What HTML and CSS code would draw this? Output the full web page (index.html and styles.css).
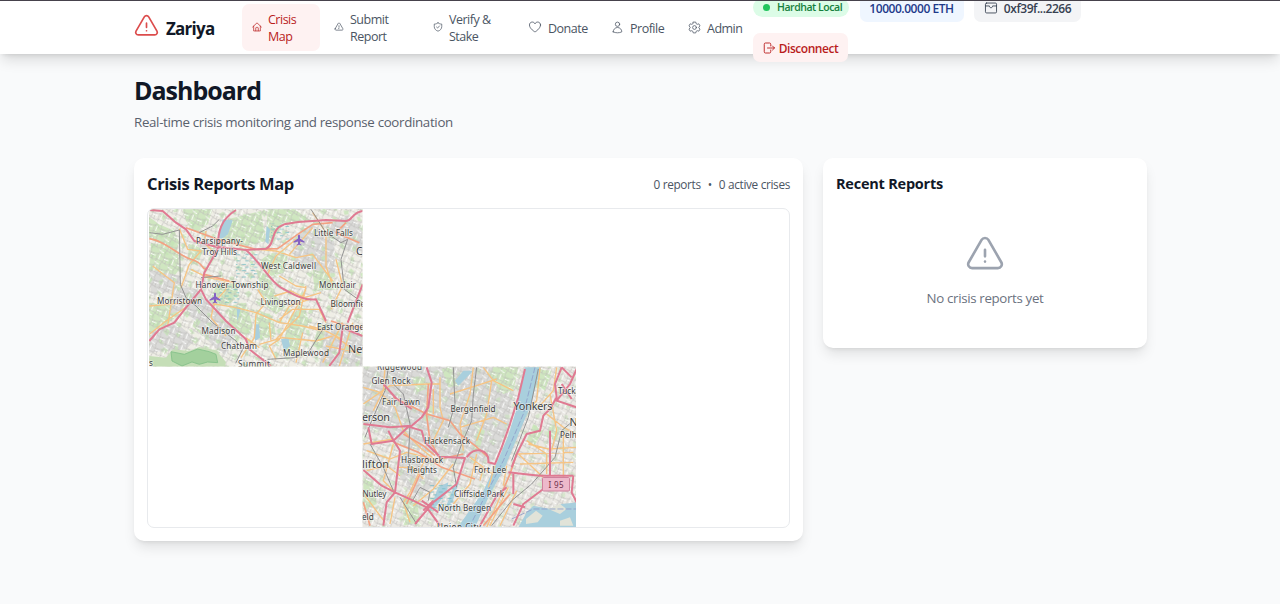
FILE: index.html
```html
<!DOCTYPE html>
<html lang="en">
<head>
<meta charset="utf-8">
<title>Zariya</title>
<link rel="stylesheet" href="styles.css">
</head>
<body>
<svg class="defs" width="0" height="0">
  <symbol id="warn" viewBox="0 0 24 24"><path d="M12 9v3.75m-9.303 3.376c-.866 1.5.217 3.374 1.948 3.374h14.71c1.73 0 2.813-1.874 1.948-3.374L13.949 3.378c-.866-1.5-3.032-1.5-3.898 0L2.697 16.126zM12 15.75h.007v.008H12v-.008z"/></symbol>
</svg>
<header class="header">
  <div class="bar">
    <div class="brand"><svg class="icon brand-icon"><use href="#warn"/></svg><span class="brand-name">Zariya</span></div>
    <nav class="nav">
      <a class="item item-active"><svg class="icon small" viewBox="0 0 24 24"><path d="M1.5 12 12 2l10.500 10M4 10v11.500h16V10M9 21v-6.500c0-1 .5-1.500 1.500-1.500h3c1 0 1.500.5 1.500 1.500V21"/></svg><span>Crisis<br>Map</span></a>
      <a class="item item-submit"><svg class="icon small" viewBox="0 0 24 24"><use href="#warn"/></svg><span>Submit<br>Report</span></a>
      <a class="item item-verify"><svg class="icon small" viewBox="0 0 24 24"><path d="M8.500 12l2.500 2.500 4.500-5M12 2c-2.500 2-5.500 3-9 3v6c0 5.500 4 9.500 9 11 5-1.500 9-5.500 9-11V5c-3.500 0-6.500-1-9-3z"/></svg><span>Verify &amp;<br>Stake</span></a>
      <a class="item item-donate"><svg class="icon" viewBox="0 0 24 24"><path d="M21.500 8.500c0-3-2.200-5-4.800-5-2.100 0-3.900 1.200-4.700 3-.8-1.800-2.600-3-4.700-3-2.600 0-4.800 2-4.800 5 0 6.500 9.500 12 9.500 12s9.500-5.500 9.500-12z"/></svg><span>Donate</span></a>
      <a class="item item-profile"><svg class="icon" viewBox="0 0 24 24"><path d="M16 6a4 4 0 1 1-8 0 4 4 0 0 1 8 0zM4 20c.1-4.500 3.600-8 8-8s7.900 3.500 8 8c-2.500 1.200-5.200 1.800-8 1.800s-5.500-.6-8-1.800z"/></svg><span>Profile</span></a>
      <a class="item item-admin"><svg class="icon" viewBox="0 0 24 24"><path d="M9.700 2h4.600l.8 3 1.900 1.100 3-.9 2.200 3.900-2.200 2.200v1.400l2.200 2.200-2.200 3.900-3-.9-1.900 1.100-.8 3H9.700l-.8-3L7 17.900l-3 .9-2.200-3.900L4 12.700v-1.400L1.800 9.100 4 5.200l3 .9L8.900 5z"/><circle cx="12" cy="12" r="3.500"/></svg><span>Admin</span></a>
    </nav>
    <div class="wallet">
      <div class="network"><i class="dot"></i><span>Hardhat Local</span></div>
      <div class="chip balance"><span>10000.0000 ETH</span></div>
      <div class="chip address"><svg class="icon" viewBox="0 0 24 24"><path d="M2.500 8.500h6.800c0 2 1.200 3 2.700 3s2.700-1 2.700-3h6.800M4.500 3.500h15a2 2 0 0 1 2 2v13a2 2 0 0 1-2 2h-15a2 2 0 0 1-2-2v-13a2 2 0 0 1 2-2z"/></svg><span>0xf39f...2266</span></div>
      <button class="chip disconnect"><svg class="icon" viewBox="0 0 24 24"><path d="M15.500 8V4.500c0-1.500-.7-2.500-2.200-2.500H4.700C3.200 2 2.500 3 2.500 4.500v15c0 1.500.7 2.500 2.200 2.500h8.600c1.500 0 2.200-1 2.200-2.500V16M9 12h14m-4-4 4 4-4 4"/></svg><span>Disconnect</span></button>
    </div>
  </div>
</header>
<main class="main">
  <h1 class="title">Dashboard</h1>
  <p class="subtitle">Real-time crisis monitoring and response coordination</p>
  <div class="columns">
    <section class="card">
      <div class="card-head">
        <h2 class="card-title">Crisis Reports Map</h2>
        <div class="stats"><span>0 reports</span><span>•</span><span>0 active crises</span></div>
      </div>
      <div class="map">
        <svg class="map-art" viewBox="148 209 641 318">
          <defs>
            <clipPath id="t1"><path d="M149 209h213.500v157.500H149z"/></clipPath>
            <clipPath id="t2"><path d="M362.500 366.500H576V527H362.500z"/></clipPath>
            <pattern id="streets" width="43" height="37" patternUnits="userSpaceOnUse" patternTransform="rotate(24)"><path d="M0 6 12 3 22 9 43 6M7 0 5 12 9 37M25 0 28 13 23 37M0 24 12 20 43 26M34 6 37 26" fill="none" stroke="#bdbab9" stroke-width="1.600"/><path d="M12 3 14 20M28 13 43 12M5 30 20 33" fill="none" stroke="#fff" stroke-width="2.500"/></pattern>
            <pattern id="woods" width="97" height="83" patternUnits="userSpaceOnUse" patternTransform="rotate(-18)"><path d="M5 8l16-3 6 12-14 8zM50 4l10 3-4 18-9-4zM75 30l14 5-3 11-13-3zM30 42l12-6 7 12-12 11zM8 60l9 2 3 15-10-2zM63 60l16-3-5 14-10 2z" fill="#c3e3b4" opacity=".75"/></pattern>
            <pattern id="marsh" width="26" height="19" patternUnits="userSpaceOnUse"><path d="M2 4h12M12 13h10" stroke="#69b7bf" stroke-width="2.200"/></pattern>
          </defs>
          <g clip-path="url(#t1)">
            <path fill="#efeee6" d="M149 209h214v158H149z"/>
            <g transform="translate(146 206) scale(.33333)">
              <g class="green">
                <path d="M5 30 40 55 85 75 100 110 85 150 60 130 10 95zM110 10h90l-15 45-35 25-30-35zM15 110l80 20 5 60-30 40-60-20zM130 110l40 20-15 50-30-20zM245 40l100-25 15 90-60 15-70-20zM10 290l60 5 30 30-50 40-40 20zM150 330l50 10 10 30-40 20-30-30zM210 240l60-10 10 40-40 30-50-10zM250 300l50-10 20 70-20 30-50-30z"/>
                <path d="M365 10h80l50 35-80 5-40 60-15-10zM375 140l50 10-10 50-40 10-35-45zM330 190l40 20 25 70-40 10zM430 330l45-30 15 50-45 70-30-15zM330 310l50 20 10 60-50 10zM440 370l25 25-5 40-40 15-5-40zM500 190l50 10 25 50-70 5zM520 350l35 20-15 60-40-10zM350 290l40-20 30 30-30 25z"/>
              </g>
              <g class="grey-area"><path d="M80 240 150 250 220 310 270 390 240 450 180 400 120 310 65 325zM10 190l95 20 0 40-90 20zM180 80 240 120 230 140 160 120zM440 100l60-45 65 40 0 110-70-15-50-20zM540 60l60-30 50 30v80l-55-10zM10 380 90 350 150 400 120 430 10 440zM540 350l80 20 35 20v100H520z"/></g>
              <path fill="url(#woods)" d="M0 0h660v490H0z"/>
              <path fill="url(#streets)" d="M0 0h660v490H0z"/>
              <path d="M10 450l50 5 20-25 50 5 30-12 50 10 30 35-5 22H30l-20-20z" fill="#c5deb7"/>
              <path d="M78 465l-3-28 40 8 40-16 35 8 20 8 5 25-30-2-25 7-22-7-30 12z" fill="#a3d09d" stroke="#82bf88" stroke-width="2.500"/>
              <path d="M217 92l13-52 30 3-14 42-20 15zM272 300l12 10-10 36zM325 355l14 0 3 40-15 10zM405 400l22-5 5 25-18 15zM362 60l10 10-5 45-9-8z" class="water"/>
              <path fill="url(#marsh)" d="M270 143h66v73h-66zM220 240h60v50h-60zM375 52h55v50h-55z"/>
              <path class="minor" d="M10 300l90-8 60-10M100 68 125 130 165 135 130 175 105 245M180 75 175 110 205 140M135 190l50 25 80 15M230 215 240 250 205 290 195 335 240 390M10 385 60 345 125 300M200 293 270 305 330 320 400 350 470 360 530 375M335 130l55 5 60 20 50-10 60 80M400 210 450 240 480 245M430 145 500 65M450 100l-60 50-25 55M500 20l40 60 0 100 20 60M385 270l50-15 40 20 50-15M335 250l25 40-30 35-5 70-40 60M370 350l5 55M400 350l30-50 60-20M490 360l40 10 60 30M480 250 400 400 370 420 390 460M540 350l-20-40-80 0-40 30M555 310 590 240M570 160 590 240M340 415l70-20 100 10 50-15M480 240l-20 90-70 70M20 180 85 230 65 360M470 380l-20 90M560 385l80 60M540 420l100 20M590 350l-60 120M620 350l-40 130M300 395l40 30"/>
              <path class="trunk" d="M10 98C60 105 90 145 135 160S160 185 180 190M120 65 215 100 330 130 395 128 455 85 500 55 560 50M555 345l50 15 45 5M600 50 570 80 640 110M175 205l75 20"/>
              <path class="rail" d="M10 80 50 85 100 72 103 235 120 275 150 300 200 350 270 405 290 430 270 470M160 80 200 60 220 40M495 10l45 70 45 30 20-10-20 60 10 90 55 40M540 355l-50 80-45 20-80 5M165 215l60-5"/>
              <path class="motor" d="M10 12 50 15 90 50 120 70 145 105 210 122 300 132 360 128C390 115 370 70 415 55 480 40 500 48 540 42L600 45C620 45 615 20 650 15M270 12C225 40 215 75 215 130L175 200 165 250 120 305 85 350 40 370 10 405M165 250 180 280 240 345 300 400 310 430 375 480M300 132C350 175 370 225 405 245S475 285 510 280L540 345M650 235 605 350M590 365 580 440 550 480M600 370l50 20"/>
            </g>
            <g class="plane"><path id="pl" d="M299 234.500l1 1v3l4.500 3v1.300L300 241.500v2.200l1.400 1v.8l-2.400-.7-2.400.7v-.8l1.400-1v-2.200l-4.500 1.300v-1.300l4.500-3v-3z"/><use href="#pl" x="-84" y="58"/></g>
            <g class="label">
              <text x="196" y="244" textLength="47">Parsippany-</text><text x="202" y="254.500" textLength="35">Troy Hills</text><text x="314" y="235.500" textLength="39">Little Falls</text><text x="261" y="268.500" textLength="55">West Caldwell</text><text x="195.500" y="287.500" textLength="73">Hanover Township</text><text x="319" y="288" textLength="37">Montclair</text><text x="157" y="303.500" textLength="45">Morristown</text><text x="260.500" y="304.500" textLength="40">Livingston</text><text x="330.500" y="306.500">Bloomfield</text><text x="201.500" y="333.500" textLength="34">Madison</text><text x="317" y="330" textLength="47">East Orange</text><text x="221" y="348.500" textLength="36">Chatham</text><text x="283" y="356" textLength="46">Maplewood</text><text x="238" y="366.500" textLength="32">Summit</text>
              <g class="big"><text x="356" y="255">Clifton</text><text x="348" y="353">Newark</text></g><text x="149" y="366">s</text>
            </g>
          </g>
          <g clip-path="url(#t2)">
            <path fill="#ebe9e4" d="M362 366h215v162H362z"/>
            <g transform="translate(360 364) scale(.33333)">
              <g class="grey-area"><path d="M10 10h460l-30 190-40 90-110 10L220 270 140 250 60 200 10 190zM120 260l80 20 30 80-60 40-50-60z"/></g>
              <g class="green"><path d="M155 40h40l5 35-30 10zM245 15l30-5 20 55-30 5zM400 10h75l-15 70-30 10-40-50zM200 120l20 10-10 40-15 0zM10 340l30 20 10 60-40 20zM130 400l40 5 10 70-50 10zM535 15l40 5-20 60-30-10zM520 180l30 20-30 50-20-20zM355 190l20 10-15 50-20 20zM570 180l30 10-10 40-30-10z"/></g>
              <path fill="url(#woods)" opacity=".65" d="M0 0h660v500H0z"/>
              <path fill="url(#streets)" d="M0 0h660v500H0z"/>
              <path class="water" d="M495 10h48L510 130 480 200 435 310 390 390 345 490h-52l75-105 45-95 30-70 25-80zM650 415l-45 5-35 15-50-10-20 20-25 45h175zM285 50l25-30h30l-45 45zM235 370l30-15-5 30-30 40-25 20zM285 360l12-5-20 60-20 15z"/>
              <path class="parkland" d="M498 465l30-25 20 15-15 20-35 5zM565 435l35-15 20 15-20 15zM600 470l30-10 10 25h-40z"/>
              <path fill="url(#marsh)" d="M205 360h80v80h-80z"/>
              <path d="M525 10 490 150 430 290 330 485M455 465 520 435 650 435" fill="none" stroke="#8e9dca" stroke-width="2.500" stroke-dasharray="18 6"/>
              <path class="minor" d="M10 70 60 85 105 130 130 200 185 255 240 300M75 10 70 80 40 140M100 240 70 350 105 385M240 40 240 130 250 170 215 240M10 240l90-15M220 75 220 150M340 10 330 90 300 180 310 260M370 10l30 40 60 30M395 50 380 150 350 230M10 120 90 65 205 60 240 60M270 90l80-25 60-20M300 190l100-30 40 20M20 260l70 25 50-20 60 15M110 310l50 0 30 35M200 275l-50 110-20 30 20 60M280 300l-60 75-60 50M330 280l40 30-10 40M350 270l-20 90-50 60M540 10 530 110 510 130M590 10 580 80 540 125M470 270l170-5M480 300l160-5M560 150l50 40 40 20M570 90 590 200 575 260M500 230l60 40 0 60M440 305l-10 60M420 400 380 490M405 305 385 370M15 395l60 80M105 400l-15 80M505 240l60 15 85-5M475 270l80 75M610 200l0 140M340 300l60 30M470 380l-50 105M445 370 390 485M20 320l60-15 40 30"/>
              <path class="trunk" d="M100 100 160 130 200 150 270 170 300 210 345 245 385 280M205 60 200 155 210 230 240 285 310 270M100 235 175 265 245 310 345 345M130 210 190 245 225 275M470 270 450 330 420 400M180 330l-40 90M450 390 370 485M10 415 30 485"/>
              <path class="rail" d="M85 10 75 80 35 170 15 220M100 60 130 90 150 180 145 290 155 330M30 240 70 310 100 380M535 15 505 160 455 290M280 10 285 120 265 190M350 10 340 90 335 170 305 240 280 310 290 370M640 170l-35 30-20 80-70 80-60 50-60 75M155 415 180 370 210 385 205 410M120 400l50 80"/>
              <path class="motor" d="M200 10 215 55 205 130 185 160 155 185 90 190 10 180M25 190 35 240 100 230 145 188 185 200 195 235 240 278 315 282 290 360 220 415 165 480M10 318 65 365 105 385 160 410 200 430 240 485M85 200 95 220 120 260 105 385 80 415 70 485M70 60 110 105 155 135M495 15 475 100 450 180 425 250 405 300 385 295C390 255 340 245 320 280M445 325 490 330 540 335 640 335M605 10 585 60 590 100 570 135 550 155 540 200 500 210 470 270 455 310M650 15 630 60 590 110 650 130M605 60l30 45M570 200l0 135M460 330 460 390M550 375l-60 45-30 65M640 335l-5 50 15 30M360 485l50-90 30-25"/>
              <path class="motor" d="M185 410l50 35m-45-5 30-30M460 420l35 10M605 10l30 30"/>
            </g>
            <g class="shield"><rect x="542.500" y="477.500" width="27" height="13.500" rx="1"/><text x="548.500" y="487.500" textLength="15">I 95</text></g>
            <g class="label">
              <text x="377" y="370" textLength="45">Ridgewood</text><text x="371.500" y="383.500" textLength="39">Glen Rock</text><text x="382" y="405" textLength="38">Fair Lawn</text><text x="450.500" y="412" textLength="45">Bergenfield</text><text x="558" y="393.500">Tuckahoe</text><text x="424" y="444" textLength="46">Hackensack</text><text x="401" y="462.500" textLength="42">Hasbrouck</text><text x="407" y="473" textLength="30">Heights</text><text x="560" y="437.500">Pelham</text><text x="474" y="473" textLength="32">Fort Lee</text><text x="362.500" y="496.500" textLength="24">Nutley</text><text x="454" y="496.500" textLength="50">Cliffside Park</text><text x="438" y="511" textLength="53">North Bergen</text><text x="362" y="519.500">eld</text><text x="437" y="530" textLength="44">Union City</text>
              <g class="big"><text x="362" y="421" textLength="28">erson</text><text x="513.500" y="409.500" textLength="39">Yonkers</text><text x="362" y="468" textLength="27">lifton</text><text x="569.500" y="426">New</text></g>
            </g>
          </g>
        </svg>
      </div>
    </section>
    <aside class="card recent">
      <h3 class="recent-title">Recent Reports</h3>
      <div class="empty"><svg class="icon empty-icon"><use href="#warn"/></svg><span>No crisis reports yet</span></div>
    </aside>
  </div>
</main>
</body>
</html>
```
FILE: styles.css
```css
* { box-sizing: border-box; }
body { margin: 0; height: 604px; overflow: hidden; background: #f9fafb; color: #111827; font-family: "Open Sans", "Noto Sans", sans-serif; }
.defs { display: block; }
.icon { fill: none; stroke: currentColor; stroke-width: 1.5; stroke-linecap: round; stroke-linejoin: round; flex: none; width: 14px; height: 14px; }
.header { position: relative; height: 54px; background: #fff; box-shadow: 0 8px 13px -2px rgba(0,0,0,.13), 0 3px 5px -3px rgba(0,0,0,.14); }
.header::before { content: ""; position: absolute; z-index: 2; top: 0; left: 0; right: 0; height: 1px; background: #46424c; }
.bar { display: flex; align-items: center; width: 1012px; height: 54px; margin: 0 auto; }
.brand { display: flex; align-items: center; flex: none; width: 108px; padding-top: 3px; }
.brand-icon { width: 27px; height: 27px; color: #dc4c4c; margin: -4px 6px 0 -1px; }
.brand-name { font-size: 17px; font-weight: 700; line-height: 24px; letter-spacing: -.75px; }
.nav { display: flex; align-items: center; flex: none; width: 511px; font-size: 12.5px; font-weight: 500; line-height: 17px; letter-spacing: -.5px; color: #4b5563; }
.item { display: flex; align-items: center; flex: none; white-space: nowrap; gap: 6px; }
.item span { padding-top: 2px; }
.item .icon { stroke-width: 1.4; }
.item .small { width: 10px; height: 10px; stroke-width: 1.7; }
.item-active { width: 78px; height: 47px; padding-left: 10px; margin-right: 14px; border-radius: 7px; background: #fef2f2; color: #b91c1c; }
.item-submit { width: 99px; }
.item-verify { width: 95px; }
.item-donate { width: 83px; }
.item-profile { width: 77px; }
.item-profile .icon, .item-admin .icon { width: 13px; height: 13px; }
.wallet { display: flex; flex-wrap: wrap; flex: none; align-items: center; width: 335px; gap: 11px 10.500px; font-size: 12px; font-weight: 600; letter-spacing: -.45px; white-space: nowrap; }
.network { display: flex; align-items: center; width: 96px; height: 19px; padding-left: 10px; gap: 7px; border-radius: 10px; background: #dcfce7; color: #15803d; font-size: 10.5px; }
.dot { width: 7px; height: 7px; border-radius: 50%; background: #22c55e; }
.chip { display: flex; align-items: center; justify-content: center; height: 29px; padding: 2px 0 0; border-radius: 7px; }
.balance { width: 104px; background: #eff6ff; color: #1e3a8a; }
.address { width: 107px; gap: 6px; background: #f3f4f6; color: #374151; }
.disconnect { width: 95px; gap: 4px; border: 0; background: #fef2f2; color: #b91c1c; font: inherit; letter-spacing: inherit; }
.disconnect .icon { width: 12px; height: 12px; stroke-width: 1.8; }
.main { width: 1013px; margin: 0 auto; padding: 19px 0 0 .5px; }
.title { margin: 0; font-size: 25px; font-weight: 700; line-height: 34px; letter-spacing: -1px; }
.subtitle { margin: 5px 0 26px; font-size: 13.3px; line-height: 20px; letter-spacing: -.32px; color: #59616d; }
.columns { display: flex; align-items: flex-start; gap: 20px; }
.card { flex: none; width: 669px; height: 383px; padding: 13px; border-radius: 10px; background: #fff; box-shadow: 0 8px 13px -2px rgba(0,0,0,.1), 0 3px 5px -3px rgba(0,0,0,.12); }
.card-head { display: flex; align-items: center; justify-content: space-between; height: 25px; margin-bottom: 12px; }
.card-title { margin: 0; font-size: 16.500px; font-weight: 700; letter-spacing: -.35px; white-space: nowrap; }
.stats { display: flex; gap: 7px; color: #4b5563; font-size: 11.8px; letter-spacing: -.33px; white-space: nowrap; }
.map { height: 320px; border: 1px solid #e8eaed; border-radius: 7px; overflow: hidden; }
.map-art { display: block; width: 641px; height: 318px; }
.recent { width: 324px; height: 190px; }
.recent-title { margin: 0; font-size: 14.5px; font-weight: 700; line-height: 25px; letter-spacing: -.22px; }
.empty { display: flex; flex-direction: column; align-items: center; margin-top: 38px; font-size: 13.3px; line-height: 20px; letter-spacing: -.34px; color: #6b7280; }
.empty-icon { width: 42px; height: 42px; margin-bottom: 12px; color: #9ca3af; }
.green { fill: #cfe6c0; }
.grey-area { fill: #dadad8; }
.water { fill: #a9cfdd; }
.parkland { fill: #e1e3d8; }
.minor, .trunk, .rail, .motor { fill: none; stroke-linejoin: round; }
.minor { stroke: #f6c484; stroke-width: 4; }
.trunk { stroke: #f3a283; stroke-width: 5; }
.rail { stroke: #929292; stroke-width: 3; }
.motor { stroke: #e07a92; stroke-width: 6; }
.plane { fill: #8461c4; }
.label { font-family: "Noto Sans", sans-serif; font-size: 8.200px; fill: #404040; stroke: rgba(255,255,255,.5); stroke-width: 1.500px; paint-order: stroke; }
.big { font-size: 10.800px; }
.shield { font-family: "Noto Sans", sans-serif; font-size: 8px; fill: #6e2f4d; }
.shield rect { fill: #edb9cb; stroke: #d0809d; }
```
